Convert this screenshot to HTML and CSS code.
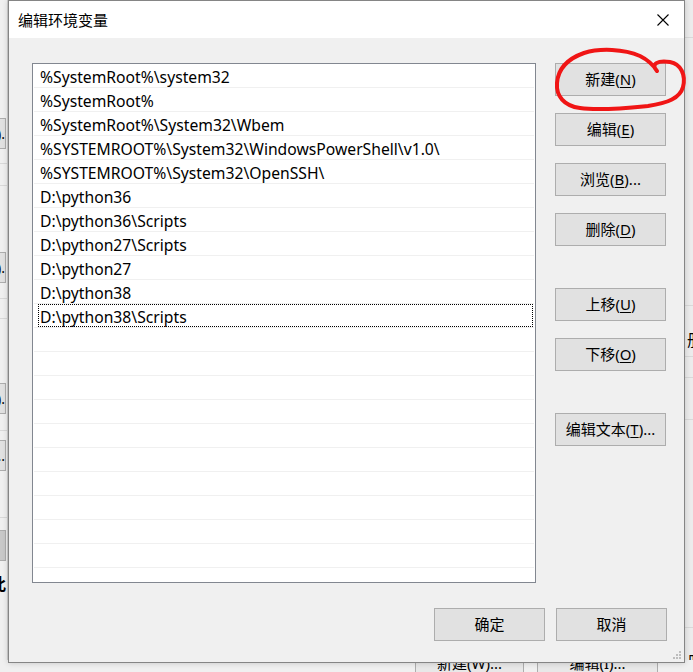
FILE: index.html
```html
<!DOCTYPE html>
<html lang="zh-CN">
<head>
<meta charset="utf-8">
<title>编辑环境变量</title>
<link rel="stylesheet" href="styles.css">
</head>
<body>
<div class="desktop">
  <div class="bg-left">
    <div class="bg-btn b1">(N).</div>
    <div class="bg-line l1"></div>
    <div class="bg-line l2"></div>
    <div class="bg-btn b2">(E).</div>
    <div class="bg-line l3"></div>
    <div class="bg-line l4"></div>
    <div class="bg-btn b3">(D).</div>
    <div class="bg-line l5"></div>
    <div class="bg-btn b4">...</div>
    <div class="bg-line l6"></div>
    <div class="bg-btn b5"></div>
    <div class="bg-char">此</div>
  </div>
  <div class="bg-right">
    <div class="bg-line r1"></div>
    <div class="bg-line r2"></div>
    <div class="bg-char rc1">册</div>
    <div class="bg-line r3"></div>
    <div class="bg-line r4"></div>
    <div class="bg-line r5"></div>
    <div class="bg-line r6"></div>
    <div class="bg-char rc2">册</div>
  </div>
  <div class="bg-bottom">
    <div class="bg-bbtn bb1">新建(W)...</div>
    <div class="bg-bbtn bb2">编辑(I)...</div>
  </div>

  <div class="dialog">
    <div class="titlebar">
      <span class="title">编辑环境变量</span>
      <span class="close">
        <svg width="12" height="12" viewBox="0 0 12 12"><path d="M0.5 0.5 L11.5 11.5 M11.5 0.5 L0.5 11.5" stroke="#000" stroke-width="1.1" fill="none"/></svg>
      </span>
    </div>
    <div class="content">
      <div class="main">
        <div class="list">
          <div class="row"><span class="txt">%SystemRoot%\system32</span></div>
          <div class="row"><span class="txt">%SystemRoot%</span></div>
          <div class="row"><span class="txt">%SystemRoot%\System32\Wbem</span></div>
          <div class="row"><span class="txt">%SYSTEMROOT%\System32\WindowsPowerShell\v1.0\</span></div>
          <div class="row"><span class="txt">%SYSTEMROOT%\System32\OpenSSH\</span></div>
          <div class="row"><span class="txt">D:\python36</span></div>
          <div class="row"><span class="txt">D:\python36\Scripts</span></div>
          <div class="row"><span class="txt">D:\python27\Scripts</span></div>
          <div class="row"><span class="txt">D:\python27</span></div>
          <div class="row"><span class="txt">D:\python38</span></div>
          <div class="row focus"><span class="txt">D:\python38\Scripts</span></div>
          <div class="row"></div><div class="row"></div><div class="row"></div>
          <div class="row"></div><div class="row"></div><div class="row"></div>
          <div class="row"></div><div class="row"></div><div class="row"></div>
          <div class="row"></div>
        </div>
        <div class="side">
          <div class="group">
            <button class="btn">新建(<u>N</u>)</button>
            <button class="btn">编辑(<u>E</u>)</button>
            <button class="btn">浏览(<u>B</u>)...</button>
            <button class="btn">删除(<u>D</u>)</button>
          </div>
          <div class="group">
            <button class="btn">上移(<u>U</u>)</button>
            <button class="btn">下移(<u>O</u>)</button>
          </div>
          <div class="group">
            <button class="btn">编辑文本(<u>T</u>)...</button>
          </div>
        </div>
      </div>
      <div class="footer">
        <button class="btn">确定</button>
        <button class="btn">取消</button>
      </div>
    </div>
    <div class="grip">
      <svg width="10" height="10" viewBox="0 0 10 10" fill="#bdbdbd"><rect x="7" y="1" width="2" height="2"/><rect x="4" y="4" width="2" height="2"/><rect x="7" y="4" width="2" height="2"/><rect x="1" y="7" width="2" height="2"/><rect x="4" y="7" width="2" height="2"/><rect x="7" y="7" width="2" height="2"/></svg>
    </div>
  </div>

  <svg class="annot" width="693" height="672" viewBox="0 0 693 672">
    <path d="M657 71 C650 64, 658 60, 670 62 C681 64, 686 75, 683 87 C680 98, 668 103, 648 106 C628 108, 600 111, 580 108 C564 106, 556 96, 557 83 C558 70, 567 59, 584 53 C600 48, 624 49, 640 56 C648 60, 654 66, 657 71" fill="none" stroke="#f01515" stroke-width="4" stroke-linecap="round" stroke-linejoin="round"/>
  </svg>
</div>
</body>
</html>
```

FILE: styles.css
```css
* { box-sizing: border-box; }
html, body {
  margin: 0;
  padding: 0;
}
body {
  width: 693px;
  height: 672px;
  overflow: hidden;
  background: #f0f0f0;
  font-family: "Noto Sans", "Noto Sans CJK SC", sans-serif;
  color: #000;
}
.desktop {
  position: relative;
  width: 693px;
  height: 672px;
  overflow: hidden;
}

/* background window pieces */
.bg-left {
  position: absolute;
  left: 0; top: 0;
  width: 8px; height: 672px;
  background: #f0f0f0;
  border-right: 1px solid #d0d0d0;
  overflow: hidden;
}
.bg-line {
  position: absolute;
  height: 1px;
  background: #d9d9d9;
  left: 0; right: 0;
}
.bg-btn {
  position: absolute;
  left: -40px;
  width: 46px;
  height: 31px;
  background: #e1e1e1;
  border: 1px solid #adadad;
  font-size: 14px;
  line-height: 29px;
  text-align: right;
  white-space: nowrap;
}
.b1 { top: 118px; }
.b2 { top: 252px; }
.b3 { top: 383px; }
.b4 { top: 440px; }
.b5 { top: 530px; background: #c8c8c8; }
.l1 { top: 163px; } .l2 { top: 185px; }
.l3 { top: 298px; } .l4 { top: 318px; }
.l5 { top: 430px; } .l6 { top: 517px; }
.bg-char {
  position: absolute;
  font-size: 16px;
  font-weight: bold;
  line-height: 16px;
}
.bg-left .bg-char { left: -10px; top: 576px; }

.bg-right {
  position: absolute;
  left: 684px; top: 0;
  width: 9px; height: 672px;
  background: #ececec;
  overflow: hidden;
}
.r1 { top: 37px; }
.r2 { top: 305px; } .r3 { top: 356px; } .r4 { top: 377px; } .r5 { top: 419px; } .r6 { top: 627px; }
.rc1 { left: 3px; top: 332px; font-weight: normal; }
.rc2 { left: 3px; top: 654px; font-weight: normal; }

.bg-bottom {
  position: absolute;
  left: 0; top: 660px;
  width: 693px; height: 12px;
  background: #f0f0f0;
  overflow: hidden;
}
.bg-bbtn {
  position: absolute;
  top: -13px;
  height: 33px;
  background: #e8e8e8;
  border: 1px solid #adadad;
  font-size: 15px;
  line-height: 31px;
  text-align: center;
}
.bb1 { left: 415px; width: 109px; }
.bb2 { left: 537px; width: 121px; }

/* dialog */
.dialog {
  position: absolute;
  left: 8px; top: 0;
  width: 677px;
  height: 663px;
  background: #f0f0f0;
  border: 1px solid #858585;
  box-shadow: 0 0 6px rgba(0,0,0,0.18);
  display: flex;
  flex-direction: column;
}
.titlebar {
  height: 37px;
  background: #fff;
  display: flex;
  align-items: center;
  justify-content: space-between;
  padding-left: 9px;
  flex: none;
}
.title {
  font-size: 15px;
  line-height: 20px;
}
.close {
  width: 42px;
  height: 37px;
  display: flex;
  align-items: center;
  justify-content: center;
}
.content {
  flex: 1;
  display: flex;
  flex-direction: column;
  padding: 25px 17px 0 23px;
}
.main {
  display: flex;
  gap: 19px;
}
.list {
  width: 504px;
  height: 520px;
  background: #fff;
  border: 1px solid #828790;
  overflow: hidden;
  padding: 0 1px;
}
.row {
  height: 24px;
  border-bottom: 1px solid #f0f0f0;
  padding-left: 6px;
  font-size: 15.7px;
  line-height: 27px;
  white-space: nowrap;
  position: relative;
  color: #000;
}
.focus::before {
  content: "";
  position: absolute;
  left: 4px; right: 1px; top: 0; bottom: 0;
  border: 1px dotted #000;
}
.side {
  width: 111px;
  display: flex;
  flex-direction: column;
  gap: 42px;
}
.group {
  display: flex;
  flex-direction: column;
  gap: 17px;
}
.btn {
  width: 111px;
  height: 33px;
  background: #e1e1e1;
  border: 1px solid #adadad;
  font-family: "Noto Sans", "Noto Sans CJK SC", sans-serif;
  font-size: 15px;
  color: #000;
  padding: 0;
  margin: 0;
  line-height: 31px;
}
.btn u { text-decoration-thickness: 1px; text-underline-offset: 2px; }
.footer {
  display: flex;
  justify-content: flex-end;
  gap: 11px;
  margin-top: 25px;
}
.grip {
  position: absolute;
  right: 2px;
  bottom: 2px;
  width: 10px;
  height: 10px;
  line-height: 0;
}
.annot {
  position: absolute;
  left: 0; top: 0;
  pointer-events: none;
}
```
